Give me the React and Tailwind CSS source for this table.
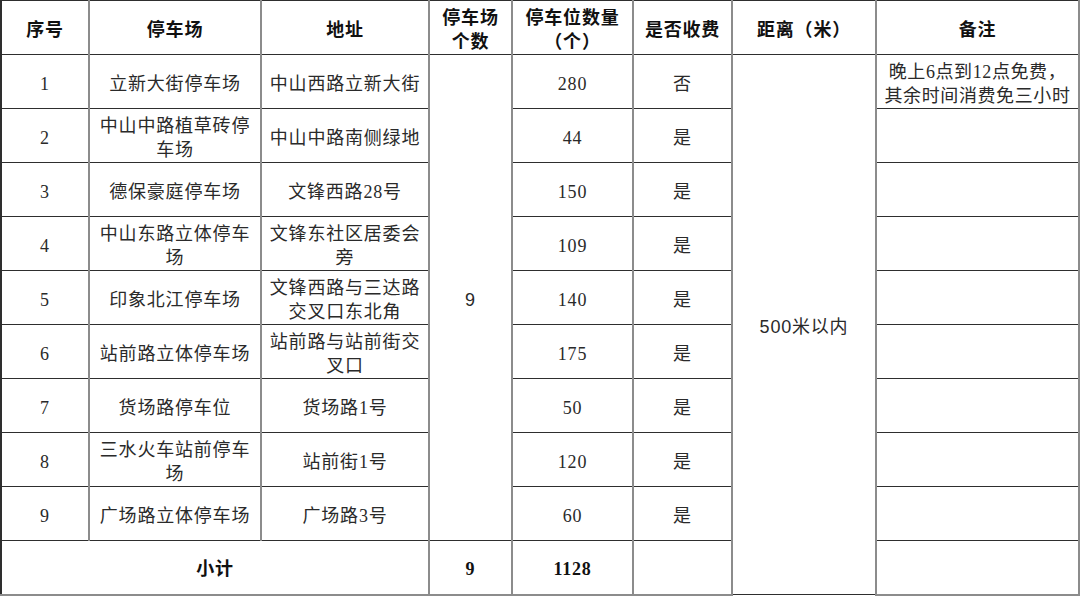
const rows = [
  { no: '1', name: '立新大街停车场', addr: '中山西路立新大街', spots: '280', fee: '否' },
  { no: '2', name: '中山中路植草砖停车场', addr: '中山中路南侧绿地', spots: '44', fee: '是' },
  { no: '3', name: '德保豪庭停车场', addr: '文锋西路28号', spots: '150', fee: '是' },
  { no: '4', name: '中山东路立体停车场', addr: '文锋东社区居委会旁', spots: '109', fee: '是' },
  { no: '5', name: '印象北江停车场', addr: '文锋西路与三达路交叉口东北角', spots: '140', fee: '是' },
  { no: '6', name: '站前路立体停车场', addr: '站前路与站前街交叉口', spots: '175', fee: '是' },
  { no: '7', name: '货场路停车位', addr: '货场路1号', spots: '50', fee: '是' },
  { no: '8', name: '三水火车站前停车场', addr: '站前街1号', spots: '120', fee: '是' },
  { no: '9', name: '广场路立体停车场', addr: '广场路3号', spots: '60', fee: '是' },
];

const cell =
  'border-x-2 border-x-[#8c8c8c] border-y border-y-[#2e2e2e] px-[5px] pt-[4px] pb-0 text-center align-middle leading-[24px]';

export default function App() {
  return (
    <div className="h-[597px] w-[1080px] overflow-hidden bg-white">
      <table
        className="w-[1078px] table-fixed border-collapse text-[18px] tracking-[0.8px] text-[#2a2a2a]"
        style={{ fontFamily: '"Liberation Serif", "Noto Sans CJK SC", serif' }}
      >
        <colgroup>
          <col className="w-[88px]" />
          <col className="w-[172px]" />
          <col className="w-[168px]" />
          <col className="w-[83px]" />
          <col className="w-[121px]" />
          <col className="w-[99px]" />
          <col className="w-[144px]" />
          <col className="w-[203px]" />
        </colgroup>
        <thead>
          <tr className="h-[54px] font-bold text-[#111]">
            <th className={`${cell} border-l-[#2e2e2e]`}>序号</th>
            <th className={cell}>停车场</th>
            <th className={cell}>地址</th>
            <th className={cell}>停车场<br />个数</th>
            <th className={cell}>停车位数量<br />（个）</th>
            <th className={cell}>是否收费</th>
            <th className={cell}>距离（米）</th>
            <th className={cell}>备注</th>
          </tr>
        </thead>
        <tbody>
          {rows.map((r, i) => (
            <tr key={r.no} className="h-[54px]">
              <td className={`${cell} border-l-[#2e2e2e]`}>{r.no}</td>
              <td className={cell}>{r.name}</td>
              <td className={cell}>{r.addr}</td>
              {i === 0 && (
                <td rowSpan={9} className={cell} style={{ fontFamily: '"Liberation Sans", sans-serif' }}>
                  9
                </td>
              )}
              <td className={cell}>{r.spots}</td>
              <td className={cell}>{r.fee}</td>
              {i === 0 && (
                <td
                  rowSpan={10}
                  className={cell}
                  style={{ fontFamily: '"Liberation Sans", "Noto Sans CJK SC", sans-serif' }}
                >
                  500米以内
                </td>
              )}
              <td className={`${cell} tracking-[0.6px]`}>
                {i === 0 ? (
                  <>
                    晚上6点到12点免费，
                    <br />
                    其余时间消费免三小时
                  </>
                ) : null}
              </td>
            </tr>
          ))}
          <tr className="h-[54px] font-bold text-[#111]">
            <td colSpan={3} className={`${cell} border-l-[#2e2e2e] border-b-2 border-b-[#8c8c8c]`}>
              小计
            </td>
            <td className={`${cell} border-b-2 border-b-[#8c8c8c]`}>9</td>
            <td className={`${cell} border-b-2 border-b-[#8c8c8c]`}>1128</td>
            <td className={`${cell} border-b-2 border-b-[#8c8c8c]`}></td>
            <td className={`${cell} border-b-2 border-b-[#8c8c8c]`}></td>
          </tr>
        </tbody>
      </table>
    </div>
  );
}
